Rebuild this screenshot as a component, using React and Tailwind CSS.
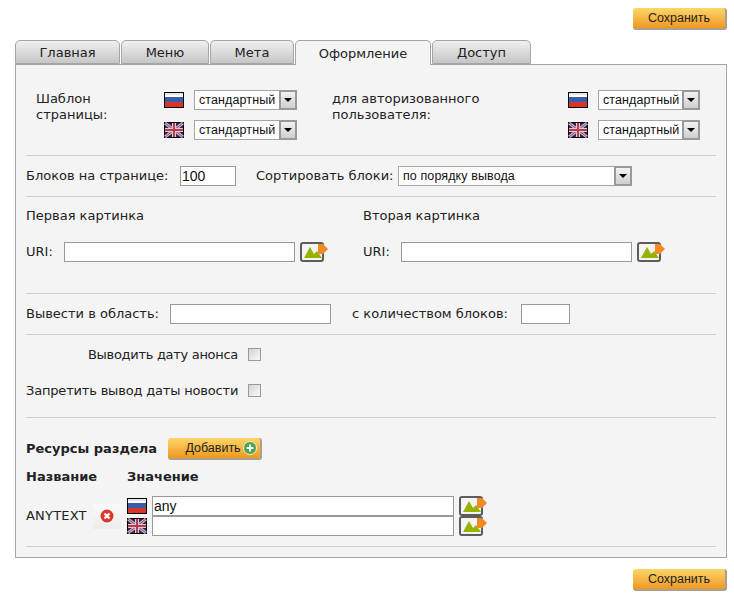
const FONT = "font-['DejaVu_Sans',sans-serif]";
const ARIAL = "font-['Liberation_Sans',sans-serif]";

function FlagRu() {
  return (
    <svg width="20" height="16" viewBox="0 0 20 16" className="block shrink-0">
      <rect width="20" height="16" fill="#000" />
      <rect x="1" y="1" width="18" height="14" fill="#fff" />
      <rect x="1" y="1" width="18" height="2" fill="#e4e4ec" />
      <rect x="1" y="5" width="18" height="5" fill="#3b5ca8" />
      <rect x="1" y="10" width="18" height="5" fill="#d8352a" />
    </svg>
  );
}

function FlagUk() {
  return (
    <svg width="20" height="16" viewBox="0 0 20 16" className="block shrink-0">
      <rect width="20" height="16" fill="#000" />
      <rect x="1" y="1" width="18" height="14" fill="#232c5c" />
      <path d="M1 1L19 15M19 1L1 15" stroke="#cdb8c4" strokeWidth="3" />
      <path d="M1 1L19 15M19 1L1 15" stroke="#a83f5a" strokeWidth="1" />
      <path d="M10 1V15M1 8H19" stroke="#dccbd2" strokeWidth="4" />
      <path d="M10 1V15M1 8H19" stroke="#b93a50" strokeWidth="2" />
    </svg>
  );
}

function ImgIcon() {
  return (
    <svg width="28" height="20" viewBox="0 0 28 20" className="block shrink-0">
      <rect x="1" y="1" width="22" height="18" rx="2" fill="#f4f4f4" stroke="#5c5c5c" strokeWidth="2" />
      <path d="M4 16L10 5L14 12L17 9L22 16Z" fill="#97b300" />
      <path d="M18 2H23L28 7L23 12H18Z" fill="#f08a24" />
    </svg>
  );
}

function Arrow() {
  return (
    <span className="absolute right-0 top-0 h-5 w-[18px] border-2 border-[#999] bg-gradient-to-b from-[#f2f2f2] to-[#cfcfcf] flex items-center justify-center pointer-events-none">
      <span className="w-0 h-0 border-x-[4px] border-x-transparent border-t-[4px] border-t-black" />
    </span>
  );
}

function Sel({ w, text }) {
  return (
    <span className={`relative block h-5 shrink-0 ${w}`}>
      <select className={`${ARIAL} block w-full h-5 appearance-none bg-white border border-[#a5a5a5] pl-[4px] pr-[18px] text-[12.5px] leading-[18px] tracking-[0.1px] text-[#111] rounded-none outline-none`}>
        <option>{text}</option>
      </select>
      <Arrow />
    </span>
  );
}

function Input({ w, value = "" }) {
  return (
    <input
      readOnly
      value={value}
      className={`${ARIAL} block h-5 shrink-0 bg-white border border-[#999] px-[1px] text-[14px] text-[#111] rounded-none outline-none ${w}`}
    />
  );
}

function Hr() {
  return <div className="h-px bg-[#cfcfcf] shrink-0" />;
}

function Gold({ children, w }) {
  return (
    <button className={`${ARIAL} h-[22px] ${w} flex items-center justify-center text-[12.5px] text-[#222] rounded-[3px] bg-gradient-to-b from-[#fbd668] to-[#f0981c] border-r-2 border-b-2 border-[#a8a090]`}>
      {children}
    </button>
  );
}

function Tab({ w, active, children }) {
  return (
    <div
      className={`${w} shrink-0 rounded-t-[5px] border border-[#a5a5a5] flex items-center justify-center pt-[2px] text-[13px] text-[#222] ${
        active
          ? "h-[25px] -mb-px border-b-0 bg-[#f4f4f4] relative"
          : "h-6 bg-gradient-to-b from-[#f0f0f0] to-[#c6c6c6]"
      }`}
    >
      {children}
    </div>
  );
}

function FlagSelects({ sel }) {
  return (
    <div className="flex flex-col gap-[10px]">
      <div className="flex items-center gap-[10px]">
        <FlagRu />
        <Sel w={sel} text="стандартный" />
      </div>
      <div className="flex items-center gap-[10px]">
        <FlagUk />
        <Sel w={sel} text="стандартный" />
      </div>
    </div>
  );
}

function Check() {
  return <span className="block w-[13px] h-[13px] shrink-0 border border-[#999] bg-gradient-to-br from-[#d4d4d4] to-[#fafafa]" />;
}

export default function App() {
  return (
    <div className={`${FONT} w-[734px] h-[600px] bg-white text-[13px] text-[#222] pt-2 pl-[15px] pr-[7px] flex flex-col overflow-hidden`}>
      <div className="flex justify-end shrink-0">
        <Gold w="w-[94px]">Сохранить</Gold>
      </div>

      <div className="flex gap-px mt-[10px] shrink-0">
        <Tab w="w-[105px]">Главная</Tab>
        <Tab w="w-[88px]">Меню</Tab>
        <Tab w="w-[84px]">Мета</Tab>
        <Tab w="w-[136px]" active>Оформление</Tab>
        <Tab w="w-[99px]">Доступ</Tab>
      </div>

      <div className="h-[494px] shrink-0 border border-[#a5a5a5] bg-[#f4f4f4] pl-[10px] pr-[10px] flex flex-col">
        {/* Templates */}
        <div className="h-[90px] shrink-0 flex items-start pt-[25px] pl-[10px]">
          <div className="w-[128px] shrink-0 leading-4 pt-px">Шаблон<br />страницы:</div>
          <FlagSelects sel="w-[103px]" />
          <div className="w-[236px] shrink-0 ml-[35px] leading-4 pt-px">для авторизованного<br />пользователя:</div>
          <FlagSelects sel="w-[102px]" />
        </div>
        <Hr />

        <div className="h-10 shrink-0 flex items-center">
          <div className="w-[154px] shrink-0">Блоков на странице:</div>
          <Input w="w-[56px]" value="100" />
          <div className="w-[142px] shrink-0 ml-5">Сортировать блоки:</div>
          <Sel w="w-[234px]" text="по порядку вывода" />
        </div>
        <Hr />

        <div className="h-24 shrink-0 flex">
          <div className="w-[337px] shrink-0 pt-[11px]">
            <div className="leading-4">Первая картинка</div>
            <div className="flex items-center mt-[18px]">
              <div className="w-[38px] shrink-0">URI:</div>
              <Input w="w-[231px]" />
              <span className="ml-[5px]"><ImgIcon /></span>
            </div>
          </div>
          <div className="flex-1 pt-[11px]">
            <div className="leading-4">Вторая картинка</div>
            <div className="flex items-center mt-[18px]">
              <div className="w-[38px] shrink-0">URI:</div>
              <Input w="w-[231px]" />
              <span className="ml-[5px]"><ImgIcon /></span>
            </div>
          </div>
        </div>
        <Hr />

        <div className="h-10 shrink-0 flex items-center">
          <div className="w-[144px] shrink-0">Вывести в область:</div>
          <Input w="w-[161px]" />
          <div className="w-[169px] shrink-0 ml-[21px]">с количеством блоков:</div>
          <Input w="w-[49px]" />
        </div>
        <Hr />

        <div className="h-[82px] shrink-0 flex flex-col pt-[13px] gap-[23px]">
          <div className="flex items-center h-[13px] w-[235px] justify-between">
            <div className="w-[212px] text-right tracking-[-0.3px]">Выводить дату анонса</div>
            <Check />
          </div>
          <div className="flex items-center h-[13px] w-[235px] justify-between">
            <div className="w-[212px] text-right whitespace-nowrap tracking-[-0.18px]">Запретить вывод даты новости</div>
            <Check />
          </div>
        </div>
        <Hr />

        <div className="h-[128px] shrink-0 flex flex-col">
          <div className="flex items-center pt-5">
            <div className="w-[142px] shrink-0 font-bold">Ресурсы раздела</div>
            <Gold w="w-[94px] pl-[14px]">
              Добавить
              <svg width="14" height="14" viewBox="0 0 14 14" className="ml-[2px]">
                <circle cx="7" cy="7" r="6.5" fill="#4da64d" stroke="#e8f0d8" />
                <path d="M7 3.5V10.5M3.5 7H10.5" stroke="#fff" strokeWidth="2" />
              </svg>
            </Gold>
          </div>
          <div className="flex font-bold mt-[9px] leading-4">
            <div className="w-[101px] shrink-0">Название</div>
            <div>Значение</div>
          </div>
          <div className="flex mt-[11px]">
            <div className="w-[67px] shrink-0 self-center tracking-[0.2px] whitespace-nowrap">ANYTEXT</div>
            <div className="w-[28px] h-[25px] shrink-0 mr-[6px] self-center flex items-center justify-center bg-gradient-to-b from-[#fafafa] to-[#ececec]">
              <svg width="14" height="14" viewBox="0 0 14 14">
                <circle cx="7" cy="7" r="6.5" fill="#d9382a" />
                <path d="M4.5 4.5L9.5 9.5M9.5 4.5L4.5 9.5" stroke="#fff" strokeWidth="2.2" />
              </svg>
            </div>
            <div className="flex flex-col">
              <div className="flex items-center h-5">
                <FlagRu />
                <Input w="w-[302px] ml-[5px]" value="any" />
                <span className="ml-[5px]"><ImgIcon /></span>
              </div>
              <div className="flex items-center h-5">
                <FlagUk />
                <Input w="w-[302px] ml-[5px]" />
                <span className="ml-[5px]"><ImgIcon /></span>
              </div>
            </div>
          </div>
        </div>
        <Hr />
      </div>

      <div className="flex justify-end mt-[11px] shrink-0">
        <Gold w="w-[94px]">Сохранить</Gold>
      </div>
    </div>
  );
}
